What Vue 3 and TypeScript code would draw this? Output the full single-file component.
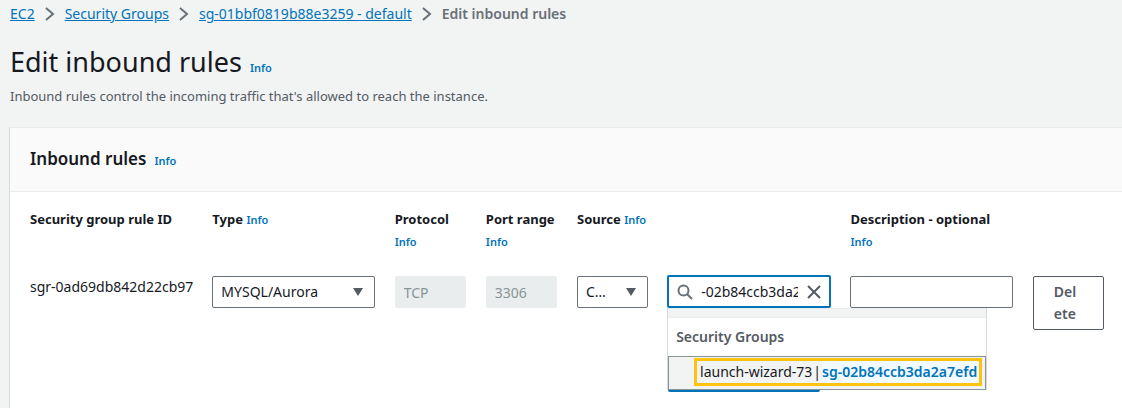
<script setup lang="ts">
import { ref } from 'vue'

const crumbs: string[] = ['EC2', 'Security Groups', 'sg-01bbf0819b88e3259 - default']
const ruleType = ref('MYSQL/Aurora')
const source = ref('Custom')
const protocol = ref('TCP')
const port = ref('3306')
const query = ref('-02b84ccb3da2a7efd')
const description = ref('')
</script>

<template>
  <main class="page">
    <nav class="crumbs" aria-label="Breadcrumbs">
      <template v-for="crumb in crumbs" :key="crumb">
        <a href="#">{{ crumb }}</a>
        <svg class="chevron" viewBox="0 0 10 16" aria-hidden="true"><path d="M1 2l7 6-7 6" /></svg>
      </template>
      <span class="current">Edit inbound rules</span>
    </nav>

    <header class="title">
      <h1>Edit inbound rules</h1>
      <a class="info" href="#">Info</a>
    </header>
    <p class="lead">Inbound rules control the incoming traffic that's allowed to reach the instance.</p>

    <section class="panel">
      <header class="panel-head">
        <h2>Inbound rules</h2>
        <a class="info" href="#">Info</a>
      </header>

      <div class="rules">
        <div class="label wide">Security group rule ID</div>
        <div class="label wide"><label for="type">Type</label> <a class="info" href="#">Info</a></div>
        <div class="label"><label for="protocol">Protocol</label> <a class="info" href="#">Info</a></div>
        <div class="label stack"><label for="port">Port range</label> <a class="info" href="#">Info</a></div>
        <div class="label source"><label for="source">Source</label> <a class="info" href="#">Info</a></div>
        <div class="label wide"><label for="description">Description - optional</label> <a class="info" href="#">Info</a></div>

        <div class="rule-id wide">sgr-0ad69db842d22cb97</div>
        <div class="select wide">
          <select id="type" v-model="ruleType"><option>MYSQL/Aurora</option></select>
          <svg class="caret" viewBox="0 0 12 10" aria-hidden="true"><path d="M1 1h10L6 9z" /></svg>
        </div>
        <input id="protocol" v-model="protocol" class="field" disabled>
        <input id="port" v-model="port" class="field" disabled>
        <div class="select short">
          <select id="source" v-model="source"><option>Custom</option></select>
          <svg class="caret" viewBox="0 0 12 10" aria-hidden="true"><path d="M1 1h10L6 9z" /></svg>
        </div>
        <div class="lookup wide">
          <div class="search">
            <svg class="glass" viewBox="0 0 16 16" aria-hidden="true"><circle cx="6.5" cy="6.5" r="5" /><path d="M10.2 10.2L15 15" /></svg>
            <input v-model="query" type="text" aria-label="Source security group">
            <button type="button" class="clear" aria-label="Clear">
              <svg viewBox="0 0 14 14" aria-hidden="true"><path d="M1 1l12 12M13 1L1 13" /></svg>
            </button>
          </div>
          <div class="token"></div>
          <div class="menu">
            <div class="strip"></div>
            <div class="group">Security Groups</div>
            <button type="button" class="option">
              <span class="highlight"><span>launch-wizard-73</span><span>|</span><mark>sg-02b84ccb3da2a7efd</mark></span>
            </button>
          </div>
        </div>
        <input id="description" v-model="description" class="field wide" type="text">
        <button type="button" class="delete">Delete</button>
      </div>
    </section>
  </main>
</template>

<style>
body {
  background: #f2f3f3;
  overflow: hidden;
}
</style>

<style scoped>
* {
  box-sizing: border-box;
}
.page {
  display: flex;
  flex-direction: column;
  min-height: 100vh;
  padding-left: 9px;
  color: #16191f;
  font: 14px/22px "Noto Sans", "Open Sans", sans-serif;
}
input,
select,
button {
  font: inherit;
  color: inherit;
  margin: 0;
  min-width: 0;
}
a {
  color: #0073bb;
}
.crumbs {
  display: flex;
  align-items: center;
  gap: 10px;
  padding: 3px 1px 0;
}
.current {
  color: #687078;
  font-weight: 600;
}
.chevron {
  width: 10px;
  height: 16px;
  fill: none;
  stroke: #687078;
  stroke-width: 2;
}
.title {
  display: flex;
  align-items: baseline;
  gap: 8px;
  padding: 19px 1px 0;
}
h1 {
  margin: 0;
  font-size: 27px;
  line-height: 36px;
  font-weight: 400;
}
.info {
  font-size: 11px;
  font-weight: 600;
  text-decoration: none;
}
.lead {
  margin: 5px 1px 20px;
  color: #545b64;
  font-size: 13px;
}
.panel {
  flex: 1;
  background: #fff;
  border-top: 1px solid #eaeded;
  border-left: 1px solid #d5dbdb;
}
.panel-head {
  display: flex;
  align-items: baseline;
  gap: 8px;
  padding: 18px 20px 19px;
  background: #fafafa;
  border-bottom: 1px solid #eaeded;
}
h2 {
  margin: 0;
  font-size: 17px;
  line-height: 25px;
  font-weight: 600;
}
.rules {
  display: grid;
  grid-template-columns: repeat(12, minmax(0, 1fr));
  column-gap: 20px;
  align-items: start;
  padding: 16px 18px 0 20px;
}
.wide {
  grid-column: span 2;
}
.label {
  min-height: 68px;
  font-size: 13px;
  font-weight: 700;
}
.stack label {
  white-space: nowrap;
}
.source {
  grid-column: span 3;
}
.rule-id {
  white-space: nowrap;
}
.field,
.select select {
  display: block;
  width: 100%;
  height: 32px;
  padding: 0 8px;
  background: #fff;
  border: 1px solid #687078;
  border-radius: 2px;
}
.field:disabled {
  background: #eaeded;
  border-color: #eaeded;
  color: #879596;
}
.select {
  display: grid;
  align-items: center;
}
.select > * {
  grid-area: 1 / 1;
}
.select select {
  appearance: none;
  padding-right: 28px;
  text-overflow: ellipsis;
}
.select.short select {
  padding-right: 34px;
}
.caret {
  justify-self: end;
  width: 12px;
  height: 10px;
  margin-right: 11px;
  fill: #545b64;
  pointer-events: none;
}
.lookup {
  position: relative;
  margin: -1px -1px 0;
}
.search {
  display: flex;
  align-items: center;
  height: 33px;
  padding: 0 8px;
  background: #fff;
  border: 2px solid #0073bb;
  border-radius: 2px;
}
.search input {
  flex: 1;
  width: 0;
  padding: 0;
  border: 0;
  outline: 0;
  background: none;
}
.glass {
  width: 16px;
  height: 16px;
  margin-right: 8px;
  fill: none;
  stroke: #687078;
  stroke-width: 2;
}
.clear {
  display: flex;
  margin-left: 9px;
  padding: 0;
  border: 0;
  background: none;
}
.clear svg {
  width: 14px;
  height: 14px;
  fill: none;
  stroke: #545b64;
  stroke-width: 2;
}
.token {
  height: 72px;
  margin: 12px 11px 0 1px;
  background: #f1faff;
  border: 2px solid #0073bb;
  border-radius: 2px;
}
.menu {
  position: absolute;
  top: 33px;
  left: 0;
  z-index: 1;
  width: 320px;
  background: #fff;
  border: 1px solid #d5dbdb;
  border-top-color: #eaeded;
  border-bottom: 0;
}
.strip {
  height: 9px;
  background: #f2f3f3;
  border-bottom: 1px solid #eaeded;
}
.group {
  padding: 8px;
  color: #545b64;
  font-weight: 600;
}
.option {
  display: flex;
  justify-content: flex-end;
  width: 100%;
  padding: 1px 3px 3px;
  background: #f2f3f3;
  border: 1px solid #879596;
  white-space: nowrap;
}
.highlight {
  display: flex;
  gap: 1px;
  padding: 0 2px 0 3px;
  border: 3px solid #ffc20e;
}
mark {
  background: #f1faff;
  color: #0073bb;
  font-weight: 600;
}
.delete {
  padding: 4px 20px;
  background: #fff;
  border: 1px solid #545b64;
  border-radius: 2px;
  color: #545b64;
  font-weight: 600;
  text-align: left;
  word-break: break-all;
}
</style>
